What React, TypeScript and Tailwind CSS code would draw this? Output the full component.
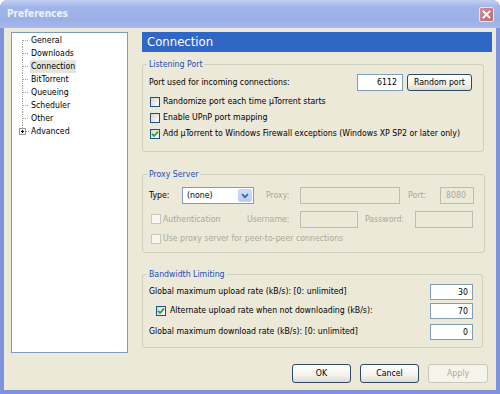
import React from "react";

function Check({ checked = false, disabled = false }: { checked?: boolean; disabled?: boolean }) {
  return (
    <span
      className={
        disabled
          ? "w-[10px] h-[10px] shrink-0 border border-[#cac8bb] bg-[#f7f6f0]"
          : "w-[10px] h-[10px] shrink-0 border border-[#1c5180] bg-[linear-gradient(135deg,#d6d6d0,#ffffff)] flex items-center justify-center"
      }
    >
      {checked && (
        <svg width="8" height="8" viewBox="0 0 8 8">
          <path d="M1 3.8 L3 6 L7 1.6" fill="none" stroke="#21a121" strokeWidth="1.7" />
        </svg>
      )}
    </span>
  );
}

function TreeRow({
  label,
  first = false,
  last = false,
  plus = false,
  selected = false,
}: {
  label: string;
  first?: boolean;
  last?: boolean;
  plus?: boolean;
  selected?: boolean;
}) {
  return (
    <div className="h-[13px] flex items-center">
      <svg width="18" height="13" viewBox="0 0 18 13" className="shrink-0" shapeRendering="crispEdges">
        <line
          x1="10.5"
          y1={first ? 6 : 0}
          x2="10.5"
          y2={last ? 6 : 13}
          stroke="#a0a0a0"
          strokeDasharray="1 1"
        />
        {plus ? (
          <>
            <rect x="7.5" y="3.5" width="6" height="6" fill="#ffffff" stroke="#919b9c" />
            <line x1="9" y1="6.5" x2="12" y2="6.5" stroke="#000000" />
            <line x1="10.5" y1="5" x2="10.5" y2="8" stroke="#000000" />
            <line x1="14" y1="6.5" x2="17" y2="6.5" stroke="#a0a0a0" strokeDasharray="1 1" />
          </>
        ) : (
          <line x1="11" y1="6.5" x2="17" y2="6.5" stroke="#a0a0a0" strokeDasharray="1 1" />
        )}
      </svg>
      <span className={selected ? "px-[1px] leading-[13px] bg-[#e6e4da]" : "px-[1px] leading-[13px]"}>{label}</span>
    </div>
  );
}

export default function App() {
  return (
    <div className="w-[500px] h-[394px] flex flex-col rounded-t-[8px] overflow-hidden bg-[#7f93dc] font-['DejaVu_Sans_Condensed','DejaVu_Sans',sans-serif] font-stretch-condensed text-[8.7px] text-black">
      {/* Title bar */}
      <div className="h-[28px] shrink-0 flex items-center pl-[7px] pr-[6px] bg-[linear-gradient(to_bottom,#c3d0f4_0%,#a2b5ea_25%,#9cb0e8_70%,#a6b8ec_100%)]">
        <span className="text-[10px] font-bold text-[#eef2fc] leading-none">Preferences</span>
        <div className="ml-auto w-[15px] h-[15px] rounded-[2px] border border-[#efe2e4] bg-[linear-gradient(135deg,#d0919a,#b96b73)] flex items-center justify-center">
          <svg width="9" height="9" viewBox="0 0 9 9">
            <path d="M1.5 1.5 L7.5 7.5 M7.5 1.5 L1.5 7.5" stroke="#ffffff" strokeWidth="1.8" strokeLinecap="square" />
          </svg>
        </div>
      </div>

      {/* Body */}
      <div className="flex-1 mx-[4px] mb-[4px] bg-[#ece9d8] flex flex-col pt-[4px] pl-[7px] pr-[4px]">
        <div className="flex h-[321px]">
          {/* Tree */}
          <div className="w-[117px] h-full shrink-0 border border-[#7f9db9] bg-white pt-[1px]">
            <TreeRow label="General" first />
            <TreeRow label="Downloads" />
            <TreeRow label="Connection" selected />
            <TreeRow label="BitTorrent" />
            <TreeRow label="Queueing" />
            <TreeRow label="Scheduler" />
            <TreeRow label="Other" />
            <TreeRow label="Advanced" last plus />
          </div>

          {/* Right column */}
          <div className="ml-[14px] flex-1 flex flex-col">
            <div className="h-[20px] bg-[#3167c4] text-white text-[13px] leading-[20px] pl-[5px]">Connection</div>

            {/* Listening Port */}
            <fieldset className="mt-[7px] mr-[8px] border border-[#d0d0bf] rounded-[3px] pl-[6px] pr-[11px] pt-[4px] pb-[9px]">
              <legend className="-ml-[2px] px-[2px] leading-[11px] text-[#1f4db8]">Listening Port</legend>
              <div className="h-[17px] flex items-center">
                <span className="flex-1">Port used for incoming connections:</span>
                <div className="w-[46px] h-[17px] border border-[#7f9db9] bg-white text-right pr-[5px] leading-[15px]">6112</div>
                <div className="ml-[4px] w-[65px] h-[17px] rounded-[3px] border border-[#2f4966] bg-[linear-gradient(to_bottom,#ffffff,#f3f2ec_60%,#dedbcf)] flex items-center justify-center">
                  Random port
                </div>
              </div>
              <div className="mt-[3px] h-[16px] flex items-center gap-[3px] pl-[1px]">
                <Check />
                <span>Randomize port each time µTorrent starts</span>
              </div>
              <div className="h-[16px] flex items-center gap-[3px] pl-[1px]">
                <Check />
                <span>Enable UPnP port mapping</span>
              </div>
              <div className="h-[16px] flex items-center gap-[3px] pl-[1px]">
                <Check checked />
                <span>Add µTorrent to Windows Firewall exceptions (Windows XP SP2 or later only)</span>
              </div>
            </fieldset>

            {/* Proxy Server */}
            <fieldset className="mt-[17px] mr-[7px] border border-[#d0d0bf] rounded-[3px] pl-[6px] pr-[10px] pt-[7px] pb-[6px]">
              <legend className="-ml-[2px] px-[2px] leading-[11px] text-[#1f4db8]">Proxy Server</legend>
              <div className="h-[17px] flex items-center">
                <span className="w-[33px] shrink-0">Type:</span>
                <div className="w-[72px] h-[17px] shrink-0 border border-[#7f9db9] bg-white flex items-center p-[1px]">
                  <span className="flex-1 pl-[3px]">(none)</span>
                  <div className="w-[14px] h-full rounded-[2px] bg-[linear-gradient(to_bottom,#d2defc,#b5cbf7)] border border-[#c3d3fd] flex items-center justify-center">
                    <svg width="8" height="6" viewBox="0 0 8 6">
                      <path d="M1 1.2 L4 4.2 L7 1.2" fill="none" stroke="#4d6185" strokeWidth="1.7" />
                    </svg>
                  </div>
                </div>
                <span className="ml-[12px] w-[34px] shrink-0 text-[#aca899]">Proxy:</span>
                <div className="w-[100px] h-[17px] shrink-0 border border-[#bdbcb0] bg-[#ece9d8]" />
                <span className="ml-[8px] w-[32px] shrink-0 text-[#aca899]">Port:</span>
                <div className="w-[34px] h-[17px] shrink-0 border border-[#bdbcb0] bg-[#ece9d8] text-[#aca899] pl-[5px] leading-[15px]">8080</div>
              </div>
              <div className="mt-[7px] h-[17px] flex items-center">
                <div className="w-[98px] shrink-0 flex items-center gap-[2px] pl-[2px]">
                  <Check disabled />
                  <span className="text-[#aca899]">Authentication</span>
                </div>
                <span className="w-[53px] shrink-0 text-[#aca899]">Username:</span>
                <div className="w-[58px] h-[17px] shrink-0 border border-[#bdbcb0] bg-[#ece9d8]" />
                <span className="ml-[7px] w-[50px] shrink-0 text-[#aca899]">Password:</span>
                <div className="w-[58px] h-[17px] shrink-0 border border-[#bdbcb0] bg-[#ece9d8]" />
              </div>
              <div className="mt-[4px] h-[14px] flex items-center gap-[2px] pl-[2px]">
                <Check disabled />
                <span className="text-[#aca899]">Use proxy server for peer-to-peer connections</span>
              </div>
            </fieldset>

            {/* Bandwidth Limiting */}
            <fieldset className="mt-[16px] mr-[9px] border border-[#d0d0bf] rounded-[3px] pl-[6px] pr-[9px] pt-[4px] pb-[7px]">
              <legend className="-ml-[2px] px-[2px] leading-[11px] text-[#1f4db8]">Bandwidth Limiting</legend>
              <div className="h-[16px] flex items-center">
                <span className="flex-1">Global maximum upload rate (kB/s): [0: unlimited]</span>
                <div className="w-[43px] h-[16px] border border-[#7f9db9] bg-white text-right pr-[4px] leading-[14px]">30</div>
              </div>
              <div className="mt-[3px] h-[16px] flex items-center">
                <div className="flex-1 flex items-center gap-[4px] pl-[7px]">
                  <Check checked />
                  <span>Alternate upload rate when not downloading (kB/s):</span>
                </div>
                <div className="w-[43px] h-[16px] border border-[#7f9db9] bg-white text-right pr-[4px] leading-[14px]">70</div>
              </div>
              <div className="mt-[5px] h-[16px] flex items-center">
                <span className="flex-1">Global maximum download rate (kB/s): [0: unlimited]</span>
                <div className="w-[43px] h-[16px] border border-[#7f9db9] bg-white text-right pr-[4px] leading-[14px]">0</div>
              </div>
            </fieldset>
          </div>
        </div>

        {/* Buttons */}
        <div className="mt-[11px] mr-[4px] flex justify-end gap-[9px]">
          <div className="w-[59px] h-[19px] rounded-[3px] border border-[#2f4966] bg-[linear-gradient(to_bottom,#ffffff,#f3f2ec_60%,#dedbcf)] flex items-center justify-center">
            OK
          </div>
          <div className="w-[59px] h-[19px] rounded-[3px] border border-[#2f4966] bg-[linear-gradient(to_bottom,#ffffff,#f3f2ec_60%,#dedbcf)] flex items-center justify-center">
            Cancel
          </div>
          <div className="w-[60px] h-[19px] rounded-[3px] border border-[#c9c7ba] bg-[#f5f4ea] text-[#aca899] flex items-center justify-center">
            Apply
          </div>
        </div>
      </div>
    </div>
  );
}
